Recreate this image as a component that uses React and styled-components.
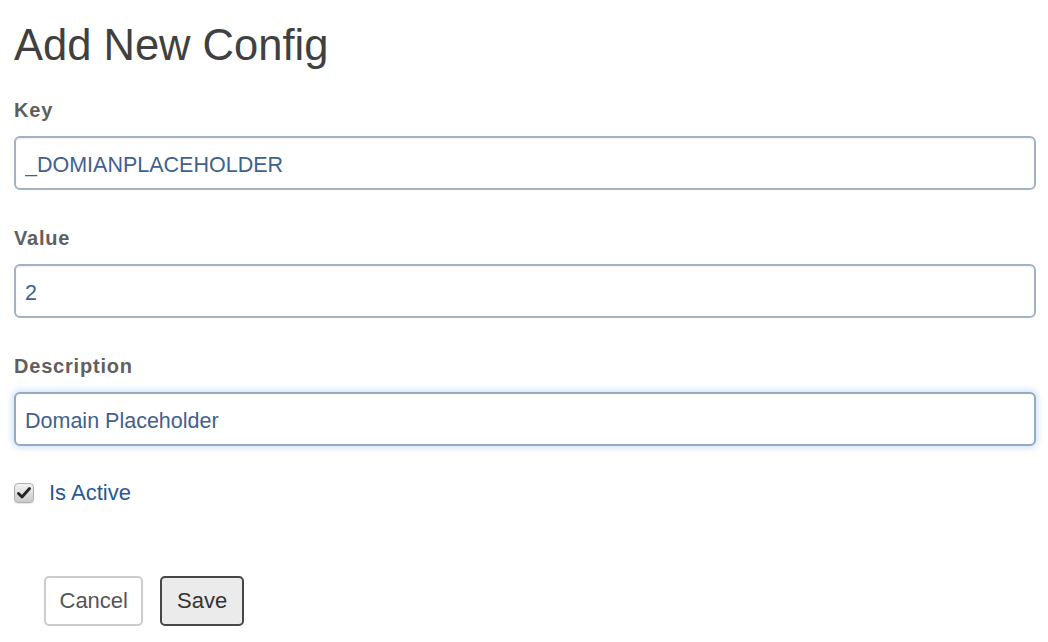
import React from "react";
import styled, { createGlobalStyle } from "styled-components";

const Global = createGlobalStyle`
  html, body { margin: 0; padding: 0; background: #fff; }
  body { font-family: "Liberation Sans", Arial, sans-serif; }
  * { box-sizing: border-box; }
`;

const Page = styled.form`
  display: flex;
  flex-direction: column;
  padding: 0 12px 0 14px;
  width: 1048px;
`;

const Title = styled.h1`
  margin: 21px 0 0 0;
  font-size: 43.5px;
  line-height: 48px;
  font-weight: 400;
  color: #404040;
`;

const Group = styled.div`
  display: flex;
  flex-direction: column;
  margin-top: ${(p) => p.$top}px;
`;

const Label = styled.label`
  font-size: 20px;
  line-height: 22px;
  font-weight: 700;
  letter-spacing: 0.8px;
  color: #5f5f5f;
  margin-bottom: 15px;
`;

const Input = styled.input`
  width: 100%;
  height: 54px;
  border: 2px solid ${(p) => (p.$focus ? "#93a9c4" : "#a3b2c4")};
  border-radius: 6px;
  padding: 5px 9px 0 9px;
  font-family: "Liberation Sans", Arial, sans-serif;
  font-size: 21.5px;
  color: #3f6190;
  background: #fff;
  outline: none;
  box-shadow: ${(p) =>
    p.$focus ? "0 0 6px 2px rgba(150, 190, 235, 0.45)" : "inset 0 1px 2px rgba(0,0,0,0.06)"};
`;

const CheckRow = styled.label`
  display: flex;
  align-items: center;
  gap: 15px;
  margin-top: 37px;
  font-size: 22px;
  line-height: 20px;
  color: #27589a;
`;

const CheckBox = styled.span`
  width: 20px;
  height: 20px;
  border-radius: 4px;
  border: 1px solid #b0b0b0;
  background: linear-gradient(#f2f2f2, #c9c9c9);
  display: flex;
  align-items: center;
  justify-content: center;
  box-shadow: 0 1px 1px rgba(0,0,0,0.1);
`;

const Buttons = styled.div`
  display: flex;
  gap: 17px;
  margin-top: 73px;
  padding-left: 30px;
`;

const Button = styled.button`
  height: 50px;
  padding: 0 ${(p) => (p.$primary ? "14.5px" : "13.5px")};
  font-family: "Liberation Sans", Arial, sans-serif;
  font-size: 22px;
  border-radius: 5px;
  color: ${(p) => (p.$primary ? "#333" : "#555")};
  background: ${(p) => (p.$primary ? "#ebebeb" : "#fff")};
  border: 2px solid ${(p) => (p.$primary ? "#474747" : "#cccccc")};
`;

export default function App() {
  return (
    <>
      <Global />
      <Page onSubmit={(e) => e.preventDefault()}>
        <Title>Add New Config</Title>
        <Group $top={30}>
          <Label>Key</Label>
          <Input defaultValue="_DOMIANPLACEHOLDER" />
        </Group>
        <Group $top={37}>
          <Label>Value</Label>
          <Input defaultValue="2" />
        </Group>
        <Group $top={37}>
          <Label>Description</Label>
          <Input $focus defaultValue="Domain Placeholder" />
        </Group>
        <CheckRow>
          <CheckBox>
            <svg width="14" height="12" viewBox="0 0 14 12">
              <path d="M1.5 6.5 L5 10 L12.5 1.5" fill="none" stroke="#222" strokeWidth="2.8" strokeLinecap="round" strokeLinejoin="round" />
            </svg>
          </CheckBox>
          Is Active
        </CheckRow>
        <Buttons>
          <Button type="button">Cancel</Button>
          <Button type="button" $primary>Save</Button>
        </Buttons>
      </Page>
    </>
  );
}
